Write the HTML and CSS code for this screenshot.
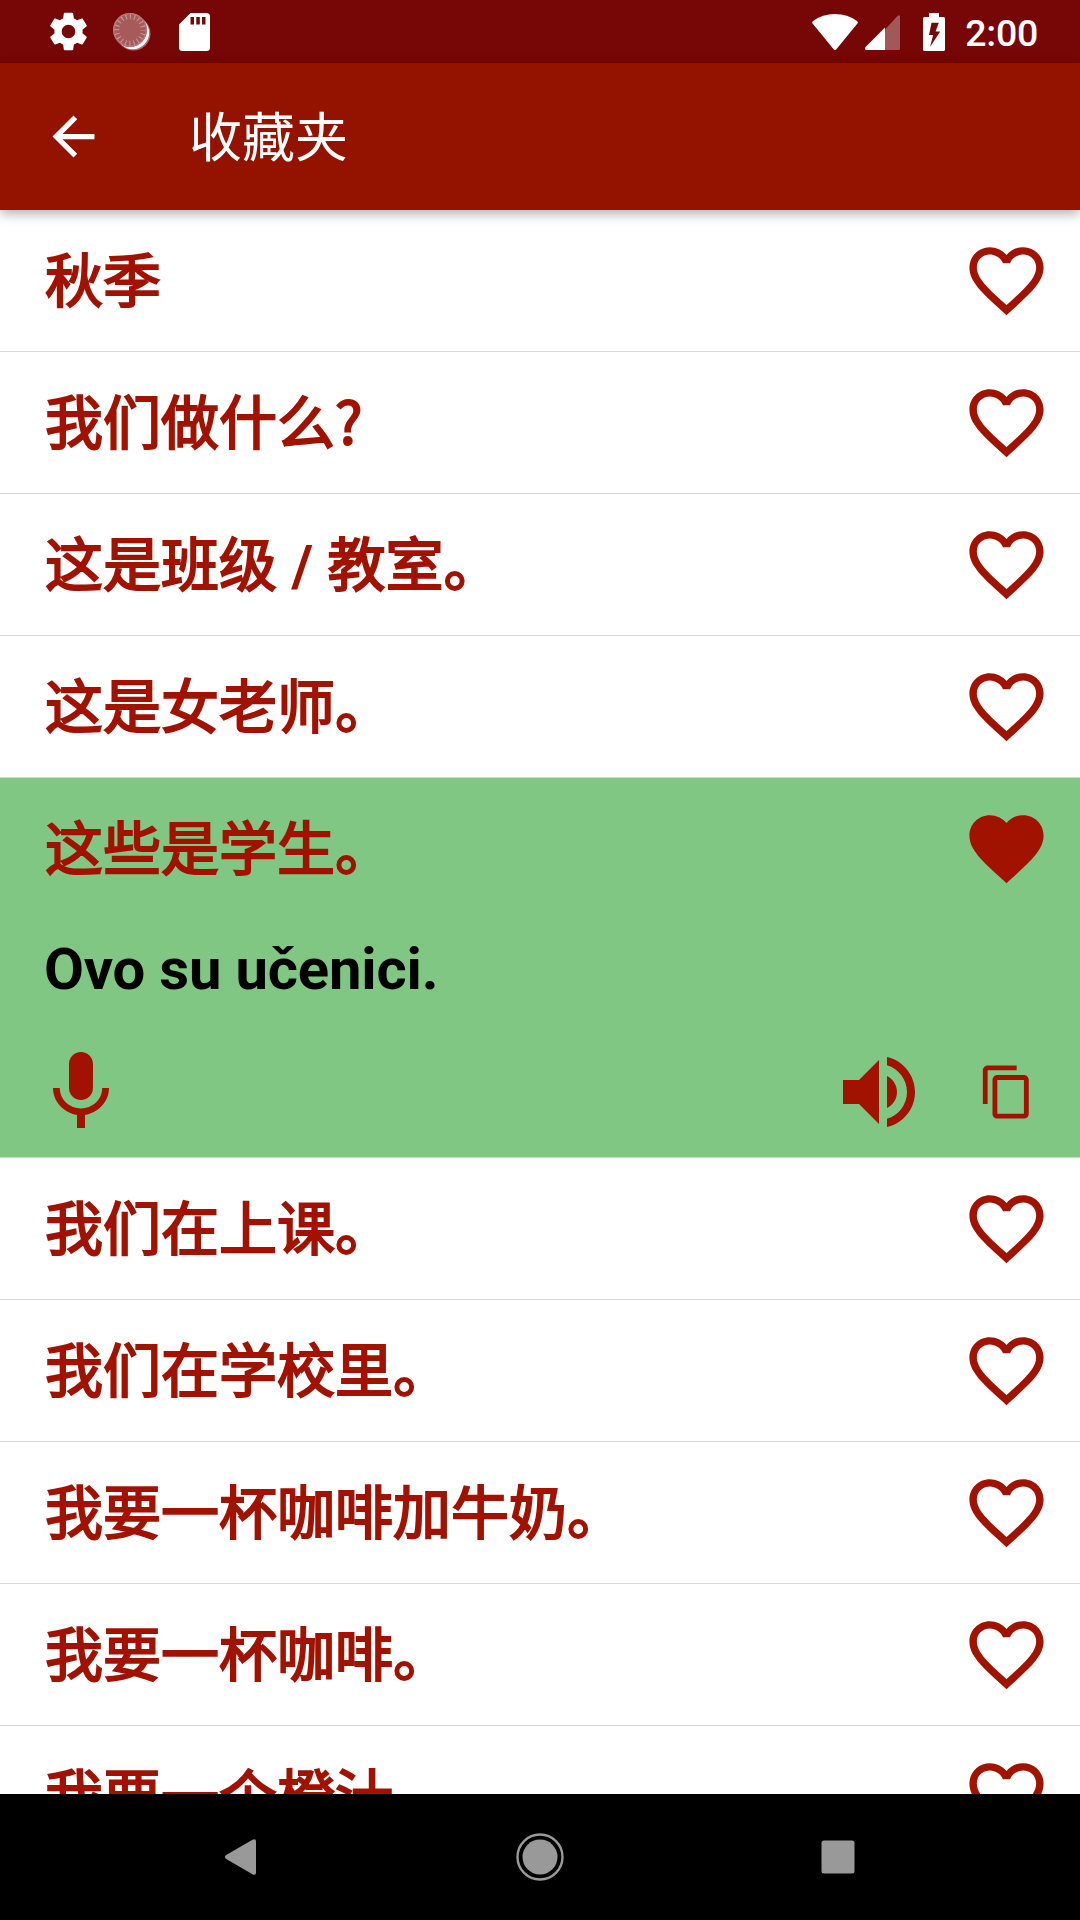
FILE: index.html
```
<!DOCTYPE html>
<html lang="zh-CN">

<head>
    <meta charset="UTF-8">
    <title>收藏夹</title>
    <link rel="stylesheet" href="styles.css">
</head>

<body>

    <!-- 图标 -->
    <svg class="sprite">
        <symbol id="heart-outline" viewBox="0 0 24 24">
            <path d="M16.5 3c-1.74 0-3.41.81-4.5 2.09C10.91 3.81 9.24 3 7.5 3 4.42 3 2 5.42 2 8.5c0 3.78 3.4 6.86 8.55 11.54L12 21.35l1.45-1.32C18.6 15.36 22 12.28 22 8.5 22 5.42 19.58 3 16.5 3zm-4.4 15.55l-.1.1-.1-.1C7.14 14.24 4 11.39 4 8.5 4 6.5 5.5 5 7.5 5c1.54 0 3.04.99 3.57 2.36h1.87C13.46 5.99 14.96 5 16.5 5c2 0 3.5 1.5 3.5 3.5 0 2.89-3.14 5.74-7.9 10.05z" />
        </symbol>
        <symbol id="heart" viewBox="0 0 24 24">
            <path d="M12 21.35l-1.45-1.32C5.4 15.36 2 12.28 2 8.5 2 5.42 4.42 3 7.5 3c1.74 0 3.41.81 4.5 2.09C13.09 3.81 14.76 3 16.5 3 19.58 3 22 5.42 22 8.5c0 3.78-3.4 6.86-8.55 11.54L12 21.35z" />
        </symbol>
    </svg>

    <div class="status-bar">
        <div class="status-left">
            <svg class="icon-settings" viewBox="0 0 24 24">
                <path d="M19.43 12.98c.04-.32.07-.64.07-.98s-.03-.66-.07-.98l2.11-1.65c.19-.15.24-.42.12-.64l-2-3.46c-.12-.22-.39-.3-.61-.22l-2.49 1c-.52-.4-1.08-.73-1.69-.98l-.38-2.65C14.46 2.18 14.25 2 14 2h-4c-.25 0-.46.18-.49.42l-.38 2.65c-.61.25-1.17.59-1.69.98l-2.49-1c-.23-.09-.49 0-.61.22l-2 3.46c-.13.22-.07.49.12.64l2.11 1.65c-.04.32-.07.65-.07.98s.03.66.07.98l-2.11 1.65c-.19.15-.24.42-.12.64l2 3.46c.12.22.39.3.61.22l2.49-1c.52.4 1.08.73 1.69.98l.38 2.65c.03.24.24.42.49.42h4c.25 0 .46-.18.49-.42l.38-2.65c.61-.25 1.17-.59 1.69-.98l2.49 1c.23.09.49 0 .61-.22l2-3.46c.12-.22.07-.49-.12-.64l-2.11-1.65zM12 15.600c-1.990 0-3.600-1.610-3.600-3.600s1.610-3.600 3.600-3.600 3.600 1.610 3.600 3.600-1.610 3.600-3.600 3.600z" />
            </svg>
            <svg class="icon-sync" viewBox="0 0 40 40">
                <circle cx="21.5" cy="21.5" r="17" fill="#b06a6a" />
                <circle cx="20.7" cy="20.7" r="16.5" fill="#fff" />
                <circle cx="18" cy="18" r="17" fill="#a65a5a" />
                <circle cx="18" cy="18" r="16.3" fill="none" stroke="#b87a7a" stroke-width="1.2" />
                <circle cx="18" cy="18" r="13.3" fill="none" stroke="#c89696" stroke-width="5" stroke-dasharray="1.1 3.078" stroke-dashoffset=".55" />
            </svg>
            <svg class="icon-sd" viewBox="0 0 31 38">
                <path fill-rule="evenodd" d="M11.5 0H27.5Q31 0 31 3.500V34.500Q31 38 27.500 38H3.500Q0 38 0 34.500V11.500ZM11.500 4V11.500H15V4ZM17.300 4V11.500H20.800V4ZM23 4V11.500H26.500V4Z" />
            </svg>
        </div>
        <div class="status-right">
            <svg class="icon-wifi" viewBox="0 0 46 36">
                <path d="M.6 9.600Q-.5 8.200 1 7Q10.500 0 23 0T45 7Q46.500 8.200 45.400 9.600L24.600 35Q23 36.800 21.400 35Z" />
            </svg>
            <svg class="icon-signal" viewBox="0 0 35 35">
                <path fill-opacity=".33" d="M20 14.500L32.500 1Q35 -1 35 2V33.500Q35 35 33.500 35H20Z" />
                <path d="M20 12.500V35H1.500Q-.8 35 .5 32Z" />
            </svg>
            <svg class="icon-battery" viewBox="0 0 22 38">
                <path fill-rule="evenodd" d="M6 0H16V4H20.500Q22 4 22 5.500V36.500Q22 38 20.500 38H1.500Q0 38 0 36.500V5.500Q0 4 1.500 4H6ZM8.500 9.700L6 22H10.200L7 34L17.200 18.500H12.600L15.800 9.700Z" />
            </svg>
            <span class="clock">2:00</span>
        </div>
    </div>

    <header>
        <svg class="icon-back" viewBox="0 0 24 24">
            <path d="M20 11H7.830l5.590-5.590L12 4l-8 8 8 8 1.410-1.410L7.830 13H20v-2z" />
        </svg>
        <h1>收藏夹</h1>
    </header>

    <main>
        <div class="item">
            <div class="row"><span class="phrase">秋季</span><svg class="fav"><use href="#heart-outline" /></svg></div>
        </div>
        <div class="item">
            <div class="row"><span class="phrase">我们做什么?</span><svg class="fav"><use href="#heart-outline" /></svg></div>
        </div>
        <div class="item">
            <div class="row"><span class="phrase">这是班级<span class="latin"> / </span>教室。</span><svg class="fav"><use href="#heart-outline" /></svg></div>
        </div>
        <div class="item">
            <div class="row"><span class="phrase">这是女老师。</span><svg class="fav"><use href="#heart-outline" /></svg></div>
        </div>
        <!-- 展开的条目 -->
        <div class="item open">
            <div class="row"><span class="phrase">这些是学生。</span><svg class="fav"><use href="#heart" /></svg></div>
            <p class="translation">Ovo su učenici.</p>
            <div class="actions">
                <svg class="icon-mic" viewBox="0 0 24 24">
                    <path d="M12 14c1.660 0 2.990-1.340 2.990-3L15 5c0-1.660-1.340-3-3-3S9 3.340 9 5v6c0 1.660 1.340 3 3 3zm5.300-3c0 3-2.540 5.100-5.300 5.100S6.700 14 6.700 11H5c0 3.410 2.720 6.230 6 6.720V21h2v-3.280c3.280-.48 6-3.300 6-6.720h-1.700z" />
                </svg>
                <svg class="icon-speaker" viewBox="0 0 24 24">
                    <path d="M3 9v6h4l5 5V4L7 9H3zm13.500 3c0-1.770-1.020-3.290-2.500-4.030v8.050c1.480-.73 2.500-2.250 2.500-4.020zM14 3.230v2.060c2.890.86 5 3.540 5 6.710s-2.110 5.850-5 6.710v2.060c4.010-.91 7-4.490 7-8.770s-2.990-7.860-7-8.770z" />
                </svg>
                <svg class="icon-copy" viewBox="0 0 24 24">
                    <path d="M16 1H4c-1.100 0-2 .9-2 2v14h2V3h12V1zm3 4H8c-1.100 0-2 .9-2 2v14c0 1.100.9 2 2 2h11c1.100 0 2-.9 2-2V7c0-1.100-.9-2-2-2zm0 16H8V7h11v14z" />
                </svg>
            </div>
        </div>
        <div class="item">
            <div class="row"><span class="phrase">我们在上课。</span><svg class="fav"><use href="#heart-outline" /></svg></div>
        </div>
        <div class="item">
            <div class="row"><span class="phrase">我们在学校里。</span><svg class="fav"><use href="#heart-outline" /></svg></div>
        </div>
        <div class="item">
            <div class="row"><span class="phrase">我要一杯咖啡加牛奶。</span><svg class="fav"><use href="#heart-outline" /></svg></div>
        </div>
        <div class="item">
            <div class="row"><span class="phrase">我要一杯咖啡。</span><svg class="fav"><use href="#heart-outline" /></svg></div>
        </div>
        <div class="item">
            <div class="row"><span class="phrase">我要一个橙汁</span><svg class="fav"><use href="#heart-outline" /></svg></div>
        </div>
    </main>

    <footer>
        <svg class="nav-icon" viewBox="0 0 48 48">
            <path d="M9.200 22L35.500 6.800Q39 5 39 8.500V39.500Q39 43 35.500 41.200L9.200 26Q6.500 24 9.200 22Z" />
        </svg>
        <svg class="nav-icon" viewBox="0 0 48 48">
            <circle cx="24" cy="24" r="17.500" />
            <circle cx="24" cy="24" r="22.500" fill="none" stroke="#999" stroke-width="2.400" />
        </svg>
        <svg class="nav-icon" viewBox="0 0 48 48">
            <rect x="7.500" y="7.500" width="33" height="33" rx="2.500" />
        </svg>
    </footer>

</body>

</html>
```
FILE: styles.css
```
* {
    box-sizing: border-box;
}

body,
html {
    height: 100%;
    margin: 0;
    font-family: Roboto, "Noto Sans CJK SC", sans-serif;
}

body {
    display: flex;
    flex-direction: column;
    overflow: hidden;
    background-color: #fff;
}

svg {
    display: block;
    flex: none;
}

.sprite {
    display: none;
}

/* 状态栏 */
.status-bar {
    display: flex;
    flex: none;
    justify-content: space-between;
    height: 63px;
    padding: 0 42px 0 46px;
    background-color: #770606;
    color: #fff;
    fill: #fff;
}

.status-left,
.status-right {
    display: flex;
    align-items: center;
}

.icon-settings {
    width: 45px;
    height: 45px;
}

.icon-sync {
    width: 40px;
    height: 40px;
    margin-left: 21px;
}

.icon-sd {
    width: 31px;
    height: 38px;
    margin-left: 27px;
}

.icon-wifi {
    width: 46px;
    height: 36px;
}

.icon-signal {
    width: 35px;
    height: 35px;
    margin: 2px 23px 0 7px;
}

.icon-battery {
    width: 22px;
    height: 38px;
    margin-right: 20px;
}

.clock {
    font-size: 37.5px;
    font-weight: 500;
    line-height: 44px;
    padding-top: 2px;
    letter-spacing: -0.3px;
}

/* 标题栏 */
header {
    display: flex;
    flex: none;
    align-items: center;
    height: 147px;
    padding-left: 42px;
    background-color: #931300;
    color: #fff;
    fill: #fff;
    box-shadow: 0 4px 11px rgba(0, 0, 0, 0.3);
    z-index: 1;
}

.icon-back {
    width: 63px;
    height: 63px;
}

h1 {
    margin: 0 0 6px 84px;
    font-family: "Noto Sans CJK SC", sans-serif;
    font-size: 53px;
    font-weight: 400;
    line-height: 76px;
}

/* 列表 */
main {
    flex: 1;
    min-height: 0;
    overflow: hidden;
    fill: #a11200;
}

.item {
    border-bottom: 1px solid #d6d6d6;
}

.row {
    display: flex;
    align-items: center;
    justify-content: space-between;
    height: 141px;
    padding: 0 29px 0 45px;
}

.phrase {
    margin-bottom: 8px;
    color: #a11200;
    font-family: "Noto Sans CJK SC", sans-serif;
    font-size: 58px;
    line-height: 84px;
    -webkit-text-stroke: 2px #a11200;
}

.latin {
    font-family: Roboto, sans-serif;
    font-weight: 700;
    line-height: 1;
    -webkit-text-stroke: 0;
}

.fav {
    width: 89px;
    height: 89px;
}

.open {
    height: 380px;
    background-color: #81c784;
}

.translation {
    margin: 0;
    padding: 16px 44px 0;
    font-size: 58px;
    font-weight: 700;
    line-height: 68px;
    letter-spacing: -0.18px;
    color: #000;
}

.actions {
    display: flex;
    align-items: center;
    padding: 40.5px 44px 0 33px;
}

.icon-mic {
    width: 96px;
    height: 96px;
    margin-right: auto;
}

.icon-speaker {
    width: 96px;
    height: 96px;
}

.icon-copy {
    width: 58px;
    height: 58px;
    margin-left: 51px;
}

/* 导航栏 */
footer {
    display: flex;
    flex: none;
    justify-content: center;
    gap: 250.5px;
    height: 126px;
    padding: 39px 1px 0 0;
    background-color: #000;
    fill: #999;
}

.nav-icon {
    width: 48px;
    height: 48px;
}
```
